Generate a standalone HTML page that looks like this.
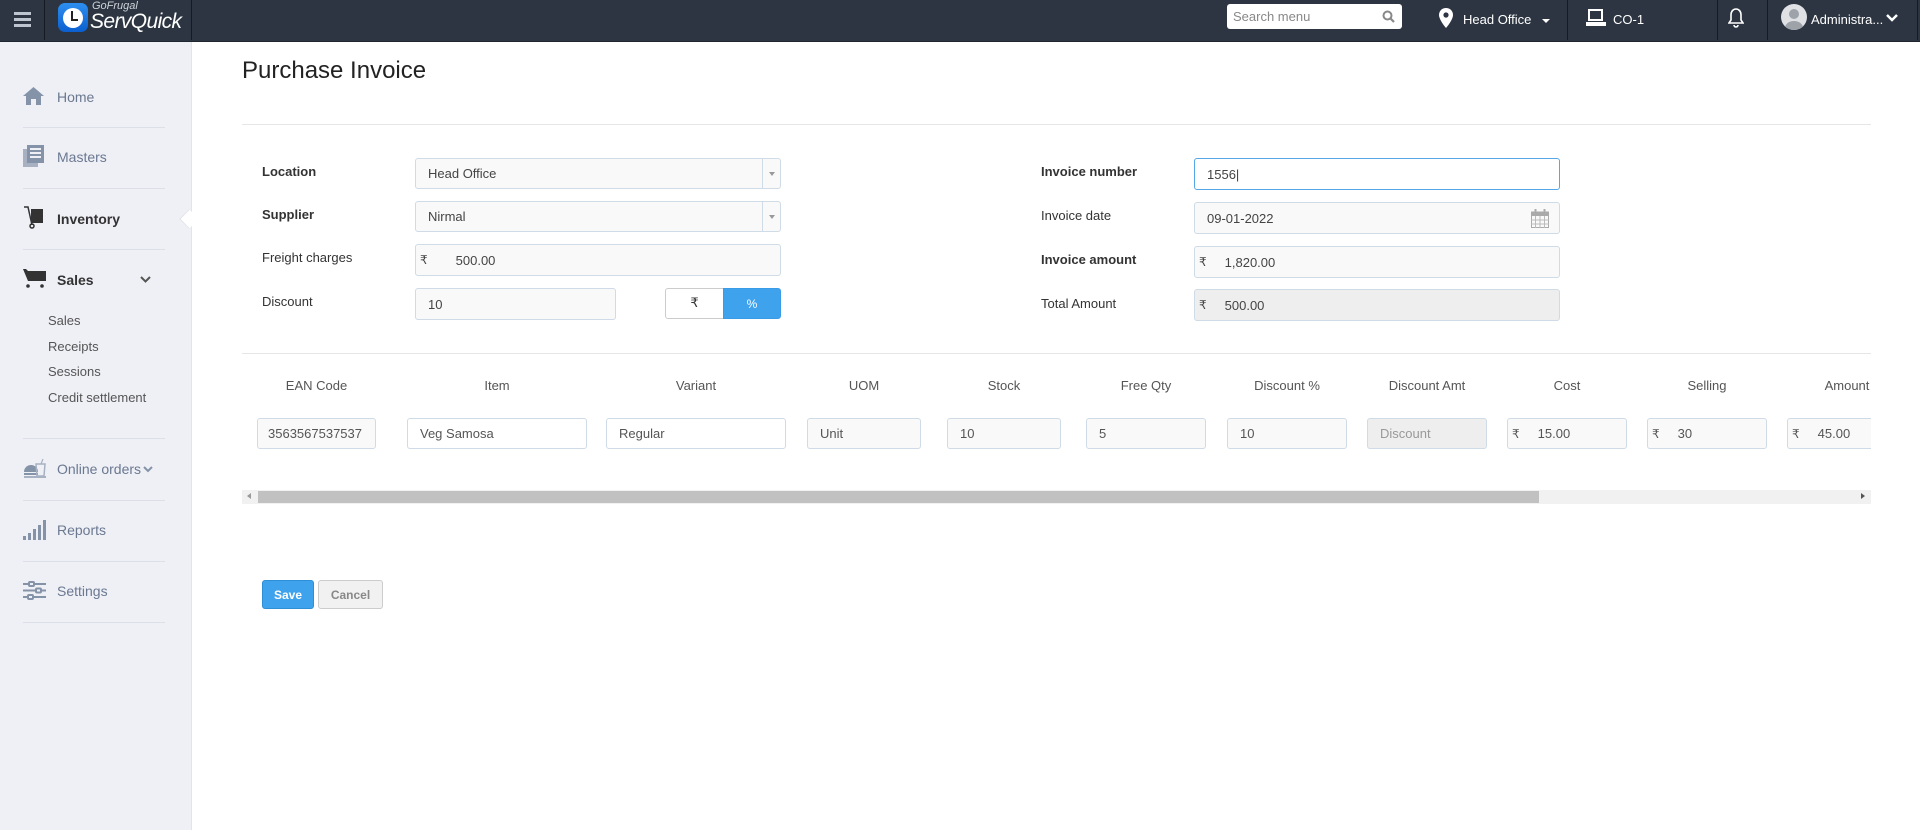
<!DOCTYPE html>
<html><head><meta charset="utf-8"><style>
*{box-sizing:border-box;margin:0;padding:0}
body{width:1920px;height:830px;overflow:hidden;background:#fff;font-family:"Liberation Sans",Arial,sans-serif;position:relative;color:#333}
.a{position:absolute}
.top{left:0;top:0;width:1920px;height:42px;background:#2c3541;border-bottom:1px solid #1f262f}
.vd{position:absolute;top:0;width:1px;height:40px;background:#161b22}
.side{left:0;top:42px;width:192px;height:788px;background:#eff0f6;border-right:1px solid #e2e4ea}
.si{position:absolute;left:57px;font-size:14px;color:#6a7890}
.sh{position:absolute;left:23px;width:142px;height:1px;background:#dcdfe8}
.sub{position:absolute;left:48px;font-size:13px;color:#555}
.lbl{position:absolute;font-size:13px;color:#333}
.b{font-weight:bold}
.in{position:absolute;border:1px solid #cfdbe6;border-radius:3px;background:#f9f9f9;font-size:13px;color:#444;padding-left:12px;display:flex;align-items:center}
.th{position:absolute;top:378px;font-size:13px;color:#555;text-align:center}
.cell{position:absolute;top:418px;height:31px;border:1px solid #cfdbe6;border-radius:3px;background:#f9f9f9;font-size:13px;color:#555;display:flex;align-items:center;padding-left:12px}
.rs{font-size:12px;margin-left:-8px;margin-right:18px}
</style></head><body>
<div class="a top">
 <div class="a" style="left:14px;top:12px;width:17px;height:3px;background:#bfc5ce;box-shadow:0 6px 0 #bfc5ce,0 12px 0 #bfc5ce"></div>
 <div class="vd" style="left:44px"></div>
 <div class="a" style="left:58px;top:3px;width:30px;height:29px;border-radius:7px;background:linear-gradient(#2d8ff0,#0b5fcf)"><div style="position:absolute;left:5px;top:5px;width:20px;height:20px;border-radius:50%;background:#fff"></div><div style="position:absolute;left:13px;top:8px;width:2px;height:10px;background:#222"></div><div style="position:absolute;left:13px;top:16px;width:7px;height:2px;background:#222"></div></div>
 <div class="a" style="left:92px;top:0px;font-size:11px;font-style:italic;color:#cfd4db">GoFrugal</div>
 <div class="a" style="left:90px;top:10px;font-size:21px;font-style:italic;color:#fff;letter-spacing:-0.6px">ServQuick</div>
 <div class="vd" style="left:191px"></div>
 <div class="a" style="left:1227px;top:4px;width:175px;height:25px;background:#fff;border-radius:3px;font-size:13px;color:#888;padding:5px 6px">Search menu<svg style="position:absolute;right:7px;top:6px" width="13" height="13" viewBox="0 0 13 13"><circle cx="5.5" cy="5.5" r="4" fill="none" stroke="#888" stroke-width="2"/><path d="M8.5 8.5L12 12" stroke="#888" stroke-width="2.2"/></svg></div>
 <svg class="a" style="left:1439px;top:8px" width="14" height="20" viewBox="0 0 14 20"><path d="M7 0C3 0 0 3 0 7c0 5 7 13 7 13s7-8 7-13c0-4-3-7-7-7z" fill="#fff"/><circle cx="7" cy="7" r="2.6" fill="#2c3541"/></svg>
 <div class="a" style="left:1463px;top:12px;font-size:13px;color:#fff">Head Office</div>
 <div class="a" style="left:1542px;top:19px;border:4px solid transparent;border-top:4px solid #fff"></div>
 <div class="vd" style="left:1567px"></div>
 <svg class="a" style="left:1586px;top:9px" width="20" height="18" viewBox="0 0 20 18"><rect x="3" y="1" width="13" height="10" fill="none" stroke="#fff" stroke-width="2"/><rect x="0" y="13" width="20" height="4" fill="#fff"/></svg>
 <div class="a" style="left:1613px;top:12px;font-size:13px;color:#fff">CO-1</div>
 <div class="vd" style="left:1717px"></div>
 <svg class="a" style="left:1728px;top:8px" width="16" height="20" viewBox="0 0 16 20"><path d="M8 1c-3 0-5 2.5-5 6v5l-2 3h14l-2-3V7c0-3.5-2-6-5-6z" fill="none" stroke="#fff" stroke-width="1.6"/><path d="M6 17a2 2 0 0 0 4 0" fill="none" stroke="#fff" stroke-width="1.6"/></svg>
 <div class="vd" style="left:1767px"></div>
 <div class="a" style="left:1781px;top:4px;width:26px;height:26px;border-radius:50%;background:#dfe1e5;overflow:hidden"><div style="position:absolute;left:8px;top:5px;width:10px;height:10px;border-radius:50%;background:#9ea3aa"></div><div style="position:absolute;left:4px;top:17px;width:18px;height:14px;border-radius:50%;background:#9ea3aa"></div></div>
 <div class="a" style="left:1811px;top:12px;font-size:13px;color:#fff">Administra...</div>
 <svg class="a" style="left:1886px;top:14px" width="12" height="9" viewBox="0 0 12 9"><path d="M1 1l5 5 5-5" fill="none" stroke="#fff" stroke-width="2.5"/></svg>
 <div class="vd" style="left:1917px"></div>
</div>

<div class="a side">
 <svg class="a" style="left:23px;top:45px" width="21" height="18" viewBox="0 0 21 18"><path d="M10.5 0L0 9h3v9h5v-6h5v6h5V9h3z" fill="#8593a8"/></svg>
 <div class="si" style="top:47px">Home</div>
 <div class="sh" style="top:85px"></div>
 <svg class="a" style="left:23px;top:103px" width="21" height="22" viewBox="0 0 21 22"><rect x="0" y="4" width="15" height="18" fill="#a7b1c2"/><rect x="4" y="0" width="17" height="18" fill="#8593a8"/><rect x="7" y="3" width="11" height="2" fill="#eff0f6"/><rect x="7" y="7" width="11" height="2" fill="#eff0f6"/><rect x="7" y="11" width="11" height="2" fill="#eff0f6"/></svg>
 <div class="si" style="top:107px">Masters</div>
 <div class="sh" style="top:146px"></div>
 <svg class="a" style="left:23px;top:163px" width="22" height="24" viewBox="0 0 22 24"><path d="M1 2l4 0 4 18" fill="none" stroke="#333" stroke-width="1.5"/><rect x="8" y="4" width="12" height="14" fill="#333"/><circle cx="9" cy="21" r="2" fill="none" stroke="#333" stroke-width="1.5"/></svg>
 <div class="si b" style="top:169px;color:#333">Inventory</div>
 <div class="a" style="left:182px;top:170px;width:14px;height:14px;background:#fff;transform:rotate(45deg);border-left:1px solid #e2e4ea;border-bottom:1px solid #e2e4ea"></div>
 <div class="sh" style="top:207px"></div>
 <svg class="a" style="left:23px;top:226px" width="23" height="20" viewBox="0 0 23 20"><path d="M0 1h3l2 2h18v10H5z" fill="#333"/><circle cx="5" cy="18" r="1.8" fill="#333"/><circle cx="19" cy="18" r="1.8" fill="#333"/></svg>
 <div class="si b" style="top:230px;color:#333">Sales</div>
 <svg class="a" style="left:140px;top:234px" width="11" height="8" viewBox="0 0 11 8"><path d="M1 1l4.5 4.5L10 1" fill="none" stroke="#555" stroke-width="2"/></svg>
 <div class="sub" style="top:271px">Sales</div>
 <div class="sub" style="top:297px">Receipts</div>
 <div class="sub" style="top:322px">Sessions</div>
 <div class="sub" style="top:348px">Credit settlement</div>
 <div class="sh" style="top:396px"></div>
 <svg class="a" style="left:23px;top:416px" width="23" height="22" viewBox="0 0 23 22"><path d="M1 14a7 7 0 0 1 14 0z" fill="#8593a8"/><rect x="1" y="15" width="14" height="2" fill="#8593a8"/><rect x="1" y="18" width="22" height="2" fill="#a7b1c2"/><path d="M13 6h9l-1 12h-7z" fill="none" stroke="#a7b1c2" stroke-width="1.5"/><path d="M18 6l2-5" stroke="#a7b1c2" stroke-width="1.2"/></svg>
 <div class="si" style="top:419px">Online orders</div>
 <svg class="a" style="left:143px;top:424px" width="10" height="7" viewBox="0 0 10 7"><path d="M1 1l4 4 4-4" fill="none" stroke="#8593a8" stroke-width="2"/></svg>
 <div class="sh" style="top:458px"></div>
 <svg class="a" style="left:23px;top:478px" width="23" height="20" viewBox="0 0 23 20"><rect x="0" y="16" width="3" height="4" fill="#8593a8"/><rect x="5" y="13" width="3" height="7" fill="#8593a8"/><rect x="10" y="9" width="3" height="11" fill="#8593a8"/><rect x="15" y="5" width="3" height="15" fill="#8593a8"/><rect x="20" y="0" width="3" height="20" fill="#8593a8"/></svg>
 <div class="si" style="top:480px">Reports</div>
 <div class="sh" style="top:519px"></div>
 <svg class="a" style="left:23px;top:539px" width="23" height="19" viewBox="0 0 23 19"><g stroke="#8593a8" stroke-width="2" fill="#eff0f6"><path d="M0 3h23M0 9.5h23M0 16h23"/><rect x="6" y="1" width="5" height="4" rx="1"/><rect x="13" y="7.5" width="5" height="4" rx="1"/><rect x="5" y="14" width="5" height="4" rx="1"/></g></svg>
 <div class="si" style="top:541px">Settings</div>
 <div class="sh" style="top:580px"></div>
</div>

<div class="a" style="left:242px;top:57px;font-size:24px;color:#222">Purchase Invoice</div>
<div class="a" style="left:242px;top:124px;width:1629px;height:1px;background:#e6e6e6"></div>

<div class="lbl b" style="left:262px;top:164px">Location</div>
<div class="in" style="left:415px;top:158px;width:366px;height:31px">Head Office<div style="position:absolute;right:0;top:0;width:18px;height:29px;border-left:1px solid #cfdbe6"></div><div style="position:absolute;right:5px;top:13px;border:3.5px solid transparent;border-top:4px solid #999"></div></div>
<div class="lbl b" style="left:262px;top:207px">Supplier</div>
<div class="in" style="left:415px;top:201px;width:366px;height:31px">Nirmal<div style="position:absolute;right:0;top:0;width:18px;height:29px;border-left:1px solid #cfdbe6"></div><div style="position:absolute;right:5px;top:13px;border:3.5px solid transparent;border-top:4px solid #999"></div></div>
<div class="lbl" style="left:262px;top:250px">Freight charges</div>
<div class="in" style="left:415px;top:244px;width:366px;height:32px"><span class="rs" style="margin-left:-8px;margin-right:28px">₹</span>500.00</div>
<div class="lbl" style="left:262px;top:294px">Discount</div>
<div class="in" style="left:415px;top:288px;width:201px;height:32px">10</div>
<div class="a" style="left:665px;top:288px;width:59px;height:31px;border:1px solid #ccc;border-radius:3px 0 0 3px;background:#fff;font-size:13px;text-align:center;padding-top:6px">₹</div>
<div class="a" style="left:723px;top:288px;width:58px;height:31px;background:#3fa2ec;border:1px solid #3a9be6;border-radius:0 3px 3px 0;color:#fff;font-size:12px;text-align:center;padding-top:8px">%</div>

<div class="lbl b" style="left:1041px;top:164px">Invoice number</div>
<div class="in" style="left:1194px;top:158px;width:366px;height:32px;background:#fff;border-color:#56a7e8">1556|</div>
<div class="lbl" style="left:1041px;top:208px">Invoice date</div>
<div class="in" style="left:1194px;top:202px;width:366px;height:32px">09-01-2022<svg style="position:absolute;right:10px;top:6px" width="18" height="19" viewBox="0 0 18 19"><rect x="0.5" y="3" width="17" height="15.5" fill="none" stroke="#aaa"/><rect x="0.5" y="3" width="17" height="4" fill="#aaa"/><rect x="3.5" y="0" width="2" height="5" fill="#aaa"/><rect x="12.5" y="0" width="2" height="5" fill="#aaa"/><path d="M0 11h18M0 15h18M4.5 7v12M9 7v12M13.5 7v12" stroke="#bbb"/></svg></div>
<div class="lbl b" style="left:1041px;top:252px">Invoice amount</div>
<div class="in" style="left:1194px;top:246px;width:366px;height:32px"><span class="rs" style="margin-right:18px">₹</span>1,820.00</div>
<div class="lbl" style="left:1041px;top:296px">Total Amount</div>
<div class="in" style="left:1194px;top:289px;width:366px;height:32px;background:#eee"><span class="rs" style="margin-right:18px">₹</span>500.00</div>

<div class="a" style="left:242px;top:353px;width:1629px;height:1px;background:#e6e6e6"></div>

<div class="a" style="left:242px;top:360px;width:1629px;height:160px;overflow:hidden">
<div style="position:relative;left:-242px;top:-360px">
<div class="th" style="left:257px;width:119px">EAN Code</div>
<div class="th" style="left:407px;width:180px">Item</div>
<div class="th" style="left:606px;width:180px">Variant</div>
<div class="th" style="left:807px;width:114px">UOM</div>
<div class="th" style="left:947px;width:114px">Stock</div>
<div class="th" style="left:1086px;width:120px">Free Qty</div>
<div class="th" style="left:1227px;width:120px">Discount %</div>
<div class="th" style="left:1367px;width:120px">Discount Amt</div>
<div class="th" style="left:1507px;width:120px">Cost</div>
<div class="th" style="left:1647px;width:120px">Selling</div>
<div class="th" style="left:1787px;width:120px">Amount</div>
<div class="cell" style="left:257px;width:119px;padding-left:10px">3563567537537</div>
<div class="cell" style="left:407px;width:180px;background:#fff">Veg Samosa</div>
<div class="cell" style="left:606px;width:180px;background:#fff">Regular</div>
<div class="cell" style="left:807px;width:114px">Unit</div>
<div class="cell" style="left:947px;width:114px">10</div>
<div class="cell" style="left:1086px;width:120px">5</div>
<div class="cell" style="left:1227px;width:120px">10</div>
<div class="cell" style="left:1367px;width:120px;background:#eee;color:#999">Discount</div>
<div class="cell" style="left:1507px;width:120px"><span class="rs">₹</span>15.00</div>
<div class="cell" style="left:1647px;width:120px"><span class="rs">₹</span>30</div>
<div class="cell" style="left:1787px;width:120px"><span class="rs">₹</span>45.00</div>
</div></div>

<div class="a" style="left:242px;top:490px;width:1629px;height:14px;background:#f1f1f1"></div>
<div class="a" style="left:258px;top:491px;width:1281px;height:12px;background:#c1c1c1"></div>
<div class="a" style="left:247px;top:493px;border:3px solid transparent;border-right:4px solid #999;border-left:0"></div>
<div class="a" style="left:1861px;top:493px;border:3px solid transparent;border-left:4px solid #555;border-right:0"></div>

<div class="a" style="left:262px;top:580px;width:52px;height:29px;background:#3fa2ec;border:1px solid #2f8fd6;border-radius:3px;color:#fff;font-size:12px;font-weight:bold;text-align:center;padding-top:7px">Save</div>
<div class="a" style="left:318px;top:580px;width:65px;height:29px;background:#f1f1f1;border:1px solid #ccc;border-radius:3px;color:#888;font-size:12px;font-weight:bold;text-align:center;padding-top:7px">Cancel</div>
</body></html>
